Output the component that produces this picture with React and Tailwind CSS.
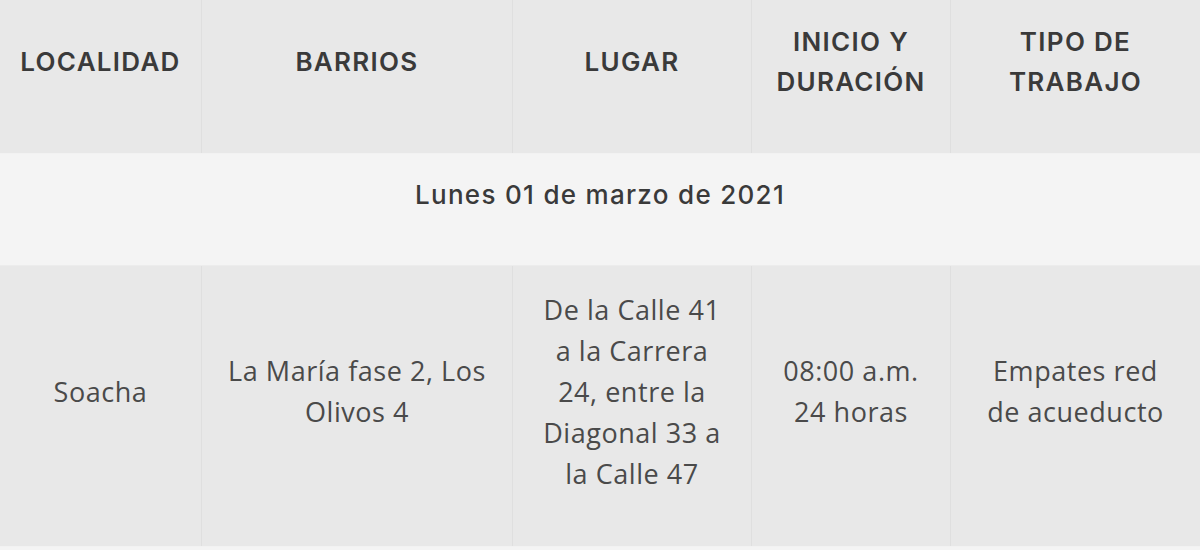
export default function App() {
  const cols = "grid grid-cols-[201px_311px_239px_199px_1fr]";
  const head = "flex items-center justify-center text-center pb-[30px] px-2 border-l border-[#dfdfdf] first:border-l-0";
  const cell = "flex items-center justify-center text-center pb-[30px] px-[24px] border-l border-[#dfdfdf] first:border-l-0";

  return (
    <div className="w-[1200px] h-[550px] bg-[#f4f4f4] overflow-hidden">
      <div
        className={`${cols} h-[154px] bg-[#e8e8e8] border-b border-[#f2f2f2] text-[#3a3a3a] font-semibold text-[26px] leading-[40px] tracking-[0.05em]`}
        style={{ fontFamily: "Inter, 'Noto Sans', sans-serif" }}
      >
        <div className={head}>LOCALIDAD</div>
        <div className={head}>BARRIOS</div>
        <div className={head}>LUGAR</div>
        <div className={head}>INICIO Y<br />DURACIÓN</div>
        <div className={head}>TIPO DE<br />TRABAJO</div>
      </div>

      <div
        className="h-[112px] bg-[#f4f4f4] border-b border-[#ececec] flex items-center justify-center pb-[30px] text-[26px] font-medium tracking-[0.05em] text-[#3a3a3a]"
        style={{ fontFamily: "Inter, 'Noto Sans', sans-serif" }}
      >
        Lunes 01 de marzo de 2021
      </div>

      <div
        className={`${cols} h-[281px] bg-[#e8e8e8] border-b border-[#f2f2f2] text-[#4a4a4a] text-[27px] leading-[41px] tracking-[0.02em]`}
        style={{ fontFamily: "'Open Sans', sans-serif" }}
      >
        <div className={cell}>Soacha</div>
        <div className={cell}>La María fase 2, Los Olivos 4</div>
        <div className={cell}>De la Calle 41 a la Carrera 24, entre la Diagonal 33 a la Calle 47</div>
        <div className={cell}>08:00 a.m.<br />24 horas</div>
        <div className={cell}>Empates red de acueducto</div>
      </div>
    </div>
  );
}
